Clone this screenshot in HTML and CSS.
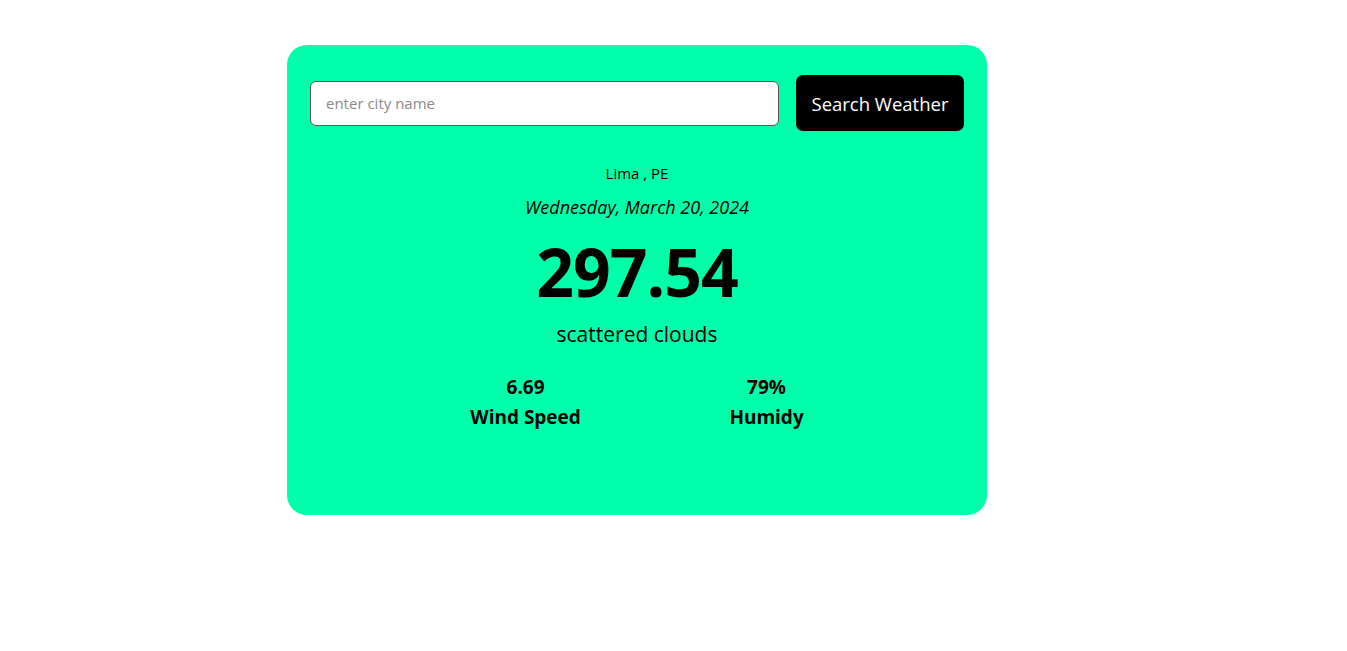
FILE: index.html
```html
<!DOCTYPE html>
<html>
<head>
<meta charset="utf-8">
<link rel="stylesheet" href="styles.css">
</head>
<body>
<div class="card">
  <div class="search">
    <input class="city" type="text" placeholder="enter city name">
    <button class="btn">Search Weather</button>
  </div>
  <div class="info">
    <div class="place">Lima , PE</div>
    <div class="date">Wednesday, March 20, 2024</div>
    <div class="temp">297.54</div>
    <div class="desc">scattered clouds</div>
    <div class="details">
      <div class="item"><div>6.69</div><div>Wind Speed</div></div>
      <div class="item"><div>79%</div><div>Humidy</div></div>
    </div>
  </div>
</div>
</body>
</html>
```
FILE: styles.css
```css
body {
  margin: 0;
  background: #fff;
  font-family: "Open Sans", "Noto Sans", sans-serif;
}
.card {
  margin: 45px 0 0 287px;
  width: 700px;
  height: 470px;
  box-sizing: border-box;
  background: #00ffaa;
  border-radius: 20px;
  padding: 30px 23px 0 23px;
}
.search {
  display: flex;
  align-items: center;
  justify-content: space-between;
}
.city {
  width: 469px;
  height: 45px;
  box-sizing: border-box;
  border: 1px solid #555;
  border-radius: 6px;
  padding: 0 15px;
  font-family: inherit;
  font-size: 15px;
  outline: none;
}
.city::placeholder { color: #8a8a8a; }
.btn {
  width: 168px;
  height: 56px;
  background: #000;
  color: #fff;
  border: none;
  border-radius: 7px;
  font-family: inherit;
  font-size: 18.5px;
  padding: 0;
}
.info {
  display: flex;
  flex-direction: column;
  align-items: center;
  color: #000;
}
.place {
  margin-top: 31px;
  font-size: 15px;
  line-height: 22px;
}
.date {
  margin-top: 11px;
  font-size: 18px;
  font-style: italic;
  line-height: 24px;
}
.temp {
  margin-top: 17px;
  font-size: 66px;
  font-weight: 700;
  line-height: 70px;
  letter-spacing: -1px;
}
.desc {
  margin-top: 14px;
  font-size: 21px;
  line-height: 28px;
}
.details {
  margin-top: 24px;
  width: 482px;
  display: flex;
  justify-content: space-around;
}
.item {
  text-align: center;
  font-size: 19px;
  font-weight: 700;
  line-height: 30px;
}
```
